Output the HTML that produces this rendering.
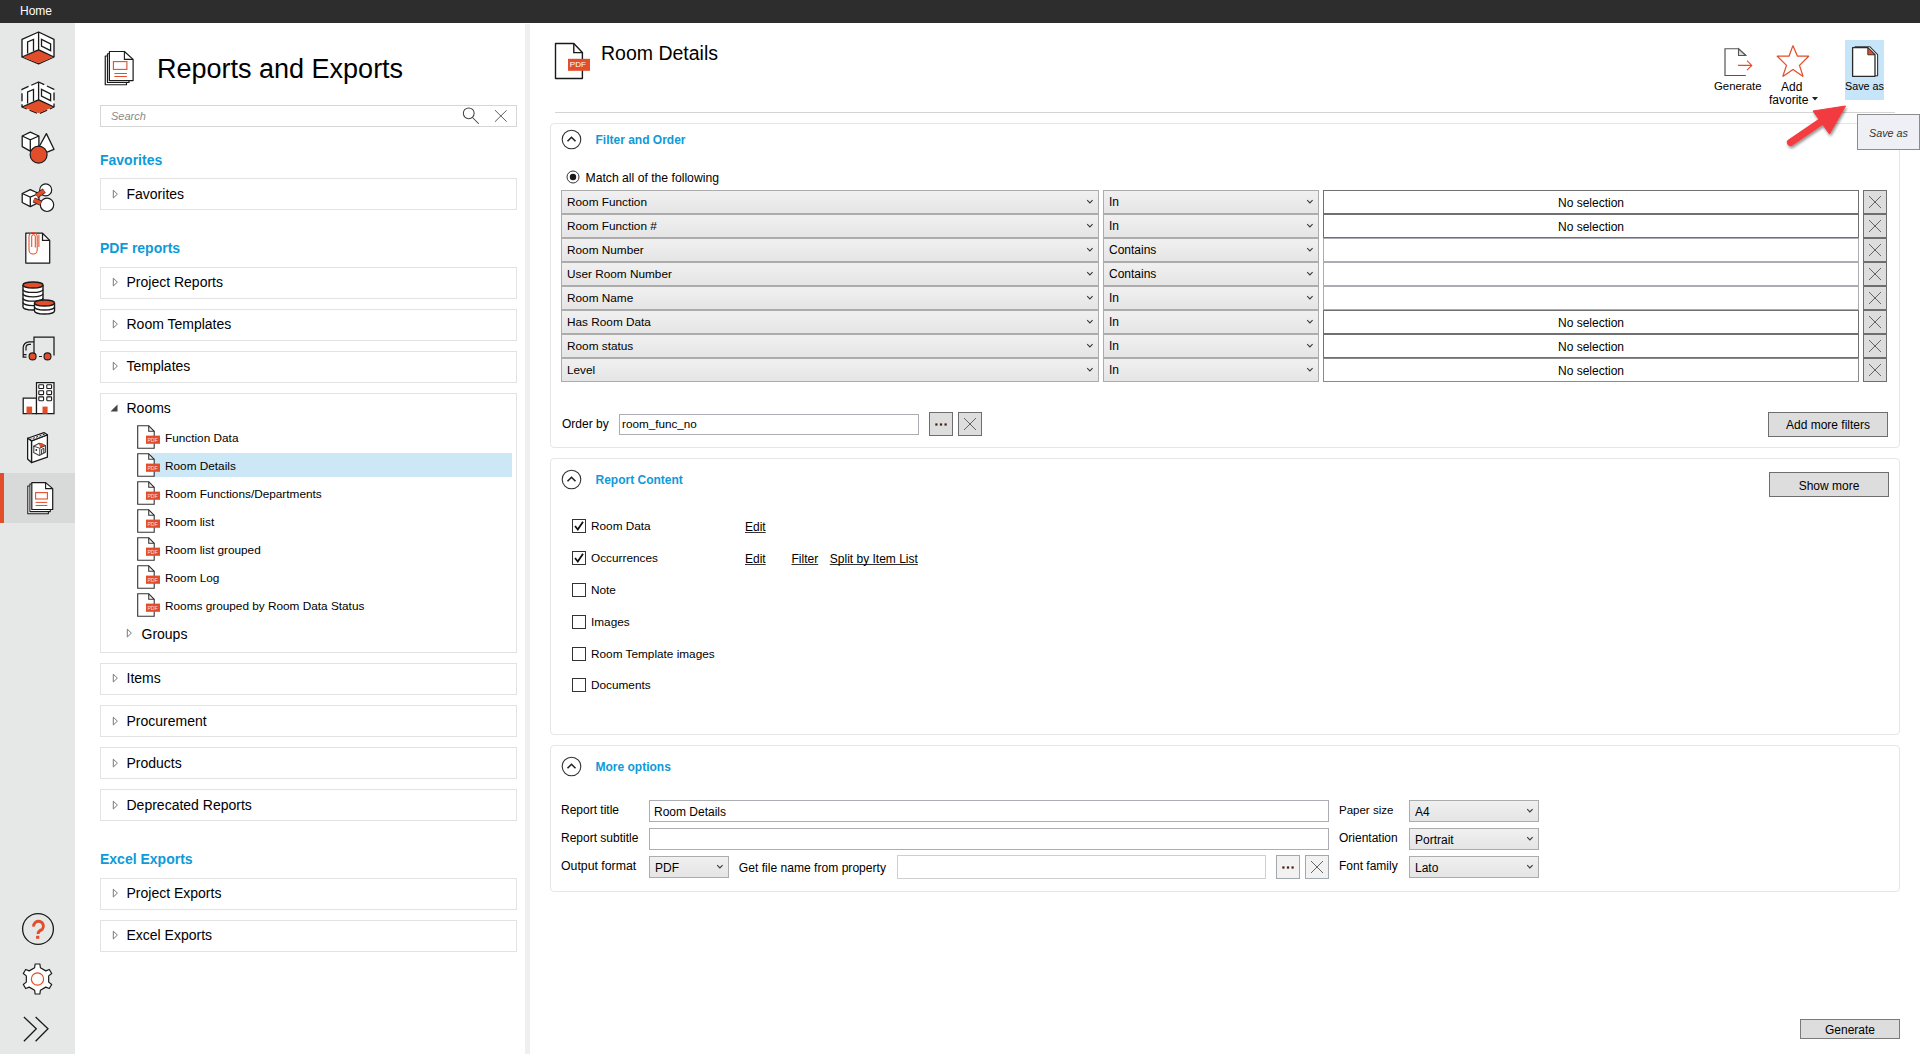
<!DOCTYPE html><html><head><meta charset="utf-8"><style>html,body{margin:0;padding:0;width:1920px;height:1054px;overflow:hidden;background:#fff;font-family:"Liberation Sans", sans-serif;}</style></head><body><div style="position:relative;width:1920px;height:1054px;overflow:hidden"><div style="position:absolute;left:0px;top:0px;width:1920px;height:23px;box-sizing:border-box;background:#2d2d2d"></div>
<div style="position:absolute;left:20px;top:4.84px;font-size:12px;line-height:12px;color:#fff;font-weight:400;font-style:normal;white-space:nowrap;text-align:left;">Home</div>
<div style="position:absolute;left:0px;top:23px;width:75px;height:1031px;box-sizing:border-box;background:#e6e7e7"></div>
<div style="position:absolute;left:0px;top:473px;width:75px;height:50px;box-sizing:border-box;background:#d8d9d9"></div>
<div style="position:absolute;left:0px;top:473px;width:4px;height:50px;box-sizing:border-box;background:#e24e2a"></div>
<svg style="position:absolute;left:21px;top:31px;" width="34" height="34" viewBox="0 0 34 34"><path d="M17.6 1 L1 8.4 L1 26 L17.6 32.8 L33 26 L33 8.4 Z" fill="#fff" stroke="#1a1a1a" stroke-width="1.35" stroke-linejoin="round"/>
<path d="M1.6 26 L17.6 18.8 L32.4 26 L17.6 32.3 Z" fill="#e24e2a"/>
<path d="M17.6 1 V18.8 M1 26 L17.6 18.8 L33 26" fill="none" stroke="#1a1a1a" stroke-width="1.3"/>
<path d="M6.6 22.6 V11 L12.5 8.4 V20" fill="none" stroke="#1a1a1a" stroke-width="1.3"/>
<path d="M20.5 8.4 L29.6 12.9 V19.6 L20.5 15 Z" fill="none" stroke="#1a1a1a" stroke-width="1.3"/></svg>
<svg style="position:absolute;left:21px;top:81px;" width="34" height="34" viewBox="0 0 34 34"><path d="M17.6 1 L1 8.4 L1 26 L17.6 32.8 L33 26 L33 8.4 Z" fill="#fff" stroke="#1a1a1a" stroke-width="1.35" stroke-linejoin="round" stroke-dasharray="8 3"/>
<path d="M1.6 26 L17.6 18.8 L32.4 26 L17.6 32.3 Z" fill="#e24e2a"/>
<path d="M17.6 1 V18.8 M1 26 L17.6 18.8 L33 26" fill="none" stroke="#1a1a1a" stroke-width="1.3"/>
<path d="M6.6 22.6 V11 L12.5 8.4 V20" fill="none" stroke="#1a1a1a" stroke-width="1.3"/>
<path d="M20.5 8.4 L29.6 12.9 V19.6 L20.5 15 Z" fill="none" stroke="#1a1a1a" stroke-width="1.3"/></svg>
<svg style="position:absolute;left:21px;top:131px;" width="34" height="34" viewBox="0 0 34 34"><path d="M25.4 2.6 L18 16 L26.1 21.2 L33 18.3 Z" fill="#fff" stroke="#1a1a1a" stroke-width="1.3" stroke-linejoin="round"/>
<path d="M1.2 5 L9.3 1.1 L17.9 5 V16 L9.3 20.1 L1.2 15.6 Z" fill="#fff" stroke="#1a1a1a" stroke-width="1.3" stroke-linejoin="round"/>
<path d="M1.2 5 L9.3 8.9 L17.9 5 M9.3 8.9 V20" fill="none" stroke="#1a1a1a" stroke-width="1.3"/>
<circle cx="17.6" cy="23.6" r="8.5" fill="#e24e2a" stroke="#1a1a1a" stroke-width="1.2"/></svg>
<svg style="position:absolute;left:21px;top:183px;" width="34" height="32" viewBox="0 0 34 32"><circle cx="24.7" cy="6.9" r="6" fill="#fff" stroke="#1a1a1a" stroke-width="1.2"/>
<circle cx="26" cy="21.8" r="6.7" fill="#fff" stroke="#1a1a1a" stroke-width="1.2"/>
<path d="M1.2 10.5 L9.3 6.7 L17.9 10.5 V19.5 L9.3 23.6 L1.2 19.5 Z" fill="#fff" stroke="#1a1a1a" stroke-width="1.3" stroke-linejoin="round"/>
<path d="M1.2 10.5 L9.3 14.1 L17.9 10.5 M9.3 14.1 V23.6" fill="none" stroke="#1a1a1a" stroke-width="1.3"/>
<path d="M15.6 12.8 L23.2 7.6" stroke="#1a1a1a" stroke-width="5.2"/>
<path d="M15.6 12.8 L23.2 7.6" stroke="#e24e2a" stroke-width="3.9"/>
<path d="M12.8 16.8 L19.8 20.2" stroke="#1a1a1a" stroke-width="5.2"/>
<path d="M12.8 16.8 L19.8 20.2" stroke="#e24e2a" stroke-width="3.9"/></svg>
<svg style="position:absolute;left:25px;top:232px;" width="27" height="33" viewBox="0 0 27 33"><path d="M0.8 1.2 H17.5 L24.7 8.4 V31 H0.8 Z" fill="#fff" stroke="#1a1a1a" stroke-width="1.25" stroke-linejoin="round"/>
<path d="M17.5 1.2 V8.4 H24.7" fill="none" stroke="#1a1a1a" stroke-width="1.25"/>
<rect x="4" y="0.5" width="8.2" height="21.5" rx="4.1" fill="none" stroke="#e24e2a" stroke-width="1.05"/><path d="M6.7 15 V4.6 A1.8 1.8 0 0 1 10.3 4.6 V15.5 M13.9 2.5 V15" fill="none" stroke="#e24e2a" stroke-width="1.05"/></svg>
<svg style="position:absolute;left:22px;top:281px;" width="34" height="34" viewBox="0 0 34 34"><path d="M1 4 V26 A10 3 0 0 0 21 26 V4" fill="#fff" stroke="#1a1a1a" stroke-width="1.4"/><path d="M1 8.4 A10 3 0 0 0 21 8.4" fill="none" stroke="#1a1a1a" stroke-width="1.3"/><path d="M1 12.8 A10 3 0 0 0 21 12.8" fill="none" stroke="#1a1a1a" stroke-width="1.3"/><path d="M1 17.2 A10 3 0 0 0 21 17.2" fill="none" stroke="#1a1a1a" stroke-width="1.3"/><path d="M1 21.6 A10 3 0 0 0 21 21.6" fill="none" stroke="#1a1a1a" stroke-width="1.3"/><ellipse cx="11" cy="4" rx="10" ry="3" fill="#e24e2a" stroke="#1a1a1a" stroke-width="1.4"/><path d="M12.5 22 V30 A10 3 0 0 0 32.5 30 V22" fill="#fff" stroke="#1a1a1a" stroke-width="1.4"/><path d="M12.5 26.0 A10 3 0 0 0 32.5 26.0" fill="none" stroke="#1a1a1a" stroke-width="1.3"/><ellipse cx="22.5" cy="22" rx="10" ry="3" fill="#e24e2a" stroke="#1a1a1a" stroke-width="1.4"/></svg>
<svg style="position:absolute;left:22px;top:336px;" width="34" height="26" viewBox="0 0 34 26"><path d="M12 20 V1.2 H32 V19.5" fill="none" stroke="#1a1a1a" stroke-width="1.25"/>
<path d="M12 5.8 H7 A5.8 5.8 0 0 0 1.2 11.6 V21.2 H4.5" fill="none" stroke="#1a1a1a" stroke-width="1.25"/>
<path d="M9 8.3 H7.3 A3.3 3.3 0 0 0 4 11.6 V14.5" fill="none" stroke="#1a1a1a" stroke-width="1.2"/>
<path d="M1.2 18.6 H4.5 M17 20.5 H20" fill="none" stroke="#1a1a1a" stroke-width="1.2"/>
<circle cx="10.6" cy="20.4" r="3.5" fill="#e24e2a" stroke="#1a1a1a" stroke-width="1.1"/>
<circle cx="25.5" cy="20.4" r="3.5" fill="#e24e2a" stroke="#1a1a1a" stroke-width="1.1"/></svg>
<svg style="position:absolute;left:22px;top:382px;" width="34" height="34" viewBox="0 0 34 34"><path d="M1.2 16.2 H14.5 V31.6 H1.2 Z" fill="#fff" stroke="#1a1a1a" stroke-width="1.25"/>
<path d="M14.5 0.5 H32 V31.6 H14.5 Z" fill="#fff" stroke="#1a1a1a" stroke-width="1.25"/>
<rect x="16.8" y="2.7" width="4.8" height="3.8" rx="0.6" fill="#fff" stroke="#1a1a1a" stroke-width="1.1"/>
<rect x="24.8" y="2.7" width="4.8" height="3.8" rx="0.6" fill="#fff" stroke="#1a1a1a" stroke-width="1.1"/>
<rect x="16.8" y="8.8" width="4.8" height="3.8" rx="0.6" fill="#fff" stroke="#1a1a1a" stroke-width="1.1"/>
<rect x="24.8" y="8.8" width="4.8" height="3.8" rx="0.6" fill="#fff" stroke="#1a1a1a" stroke-width="1.1"/>
<rect x="16.8" y="14.9" width="4.8" height="3.8" rx="0.6" fill="#fff" stroke="#1a1a1a" stroke-width="1.1"/>
<rect x="24.8" y="14.9" width="4.8" height="3.8" rx="0.6" fill="#fff" stroke="#1a1a1a" stroke-width="1.1"/>
<rect x="4.5" y="24.6" width="5.6" height="7" fill="#e24e2a"/>
<rect x="20.5" y="24.6" width="5.1" height="7" fill="#e24e2a"/></svg>
<svg style="position:absolute;left:27px;top:432px;" width="22" height="32" viewBox="0 0 22 32"><path d="M4.5 8.9 L20.4 2.8 V25.2 L4.5 30.6 Z" fill="#fff" stroke="#1a1a1a" stroke-width="1.3" stroke-linejoin="round"/>
<path d="M0.6 6.3 L17 0.6 L20.4 2.8 L4.5 8.9 Z" fill="#fff" stroke="#1a1a1a" stroke-width="1.2" stroke-linejoin="round"/>
<path d="M2.5 7.6 L18.5 1.8" fill="none" stroke="#1a1a1a" stroke-width="1" stroke-dasharray="2.2 1.3"/>
<path d="M0.6 6.3 V27.1 L4.5 30.6 V8.9 Z" fill="#fff" stroke="#1a1a1a" stroke-width="1.3" stroke-linejoin="round"/>
<path d="M6.6 14.2 L12.2 11.2 L18.4 13.6 V20.2 L12.3 23.4 L6.6 20.6 Z" fill="#fff" stroke="#444" stroke-width="1.1" stroke-linejoin="round"/>
<path d="M7 14.6 V20.3" stroke="#999" stroke-width="1"/>
<path d="M11.8 12 L15 10.9 L18.2 13.4 L13.6 16 Z" fill="#e24e2a"/>
<path d="M6.6 14.2 L12.8 16.2 L18.4 13.6 M12.8 16.2 V23" fill="none" stroke="#333" stroke-width="0.9"/>
<path d="M14.6 22 V17.4 L16.8 16.4 V21" fill="none" stroke="#333" stroke-width="1"/>
<circle cx="9.3" cy="18" r="0.9" fill="#222"/></svg>
<svg style="position:absolute;left:27px;top:482px;" width="27" height="33" viewBox="0 0 27 33"><path d="M0.8 4 H14.6 L21.4 10 V31.8 H0.8 Z" fill="#fff" stroke="#1a1a1a" stroke-width="1.05" stroke-linejoin="round"/>
<path d="M2.9 2 H16.6 L23.3 8 V29.6 H2.9 Z" fill="#fff" stroke="#1a1a1a" stroke-width="1.05" stroke-linejoin="round"/>
<path d="M4.8 0.6 H18.6 L25.7 6.6 V27.5 H4.8 Z" fill="#fff" stroke="#1a1a1a" stroke-width="1.2" stroke-linejoin="round"/>
<path d="M18.6 0.6 V6.6 H25.7" fill="none" stroke="#1a1a1a" stroke-width="1.1"/>
<rect x="8.6" y="10.6" width="11.8" height="6.4" fill="none" stroke="#e24e2a" stroke-width="1.1"/>
<path d="M8.6 20.4 H20.3 M8.6 23.5 H20.3" stroke="#e24e2a" stroke-width="1"/></svg>
<svg style="position:absolute;left:21px;top:912px;" width="34" height="34" viewBox="0 0 34 34"><circle cx="17" cy="17" r="15.4" fill="none" stroke="#1a1a1a" stroke-width="1.3"/>
<path d="M12.65 14.6 A4.9 4.9 0 1 1 21.3 17.3 Q17.1 19 17.1 21.5 V22" fill="none" stroke="#e24e2a" stroke-width="2.9" stroke-linecap="butt"/>
<rect x="15.1" y="23.8" width="3.2" height="3" fill="#e24e2a"/></svg>
<svg style="position:absolute;left:21px;top:962px;" width="34" height="34" viewBox="0 0 34 34"><path d="M14.12 1.99 L18.88 1.99 L19.38 5.76 L24.79 8.88 L28.31 7.43 L30.69 11.55 L27.67 13.88 L27.67 20.12 L30.69 22.45 L28.31 26.57 L24.79 25.12 L19.38 28.24 L18.88 32.01 L14.12 32.01 L13.62 28.24 L8.21 25.12 L4.69 26.57 L2.31 22.45 L5.33 20.12 L5.33 13.88 L2.31 11.55 L4.69 7.43 L8.21 8.88 L13.62 5.76 Z" fill="#fff" stroke="#1a1a1a" stroke-width="1.2" stroke-linejoin="round"/><circle cx="16.5" cy="17" r="6.1" fill="none" stroke="#e24e2a" stroke-width="1.2"/></svg>
<svg style="position:absolute;left:22px;top:1015px;" width="30" height="28" viewBox="0 0 30 28"><path d="M1.9 2 L14.3 13.7 L1.9 26.2 M13.6 2 L26 13.7 L13.6 26.2" fill="none" stroke="#1a1a1a" stroke-width="1.3"/></svg>
<div style="position:absolute;left:75px;top:23px;width:450px;height:1031px;box-sizing:border-box;background:#fff"></div>
<div style="position:absolute;left:525px;top:24px;width:5px;height:1030px;box-sizing:border-box;background:#efefef"></div>
<svg style="position:absolute;left:104px;top:50px;" width="31" height="36" viewBox="0 0 31 36"><path d="M1.25 6 H18 L22.5 10 V34.75 H1.25 Z" fill="#fff" stroke="#1a1a1a" stroke-width="1.2" stroke-linejoin="round"/>
<path d="M3.5 3.75 H20 L25 8.5 V32.5 H3.5 Z" fill="#fff" stroke="#1a1a1a" stroke-width="1.2" stroke-linejoin="round"/>
<path d="M5.4 1.5 H20.4 L29.1 9.4 V30.6 H5.4 Z" fill="#fff" stroke="#1a1a1a" stroke-width="1.2" stroke-linejoin="round"/>
<path d="M20.4 1.5 V9.4 H29.1" fill="none" stroke="#1a1a1a" stroke-width="1.1"/>
<rect x="9.4" y="11.6" width="13.5" height="7.8" fill="none" stroke="#e24e2a" stroke-width="1.1"/>
<path d="M10.4 23.5 H22.9 M10.4 26.5 H22.9" stroke="#e24e2a" stroke-width="1"/></svg>
<div style="position:absolute;left:157px;top:55.94px;font-size:27px;line-height:27px;color:#000;font-weight:400;font-style:normal;white-space:nowrap;text-align:left;">Reports and Exports</div>
<div style="position:absolute;left:100px;top:105px;width:417px;height:22px;box-sizing:border-box;border:1px solid #d6d6d6;background:#fff"></div>
<div style="position:absolute;left:111px;top:111.29px;font-size:11px;line-height:11px;color:#8a8a8a;font-weight:400;font-style:italic;white-space:nowrap;text-align:left;">Search</div>
<svg style="position:absolute;left:462px;top:107px;" width="18" height="18" viewBox="0 0 18 18"><circle cx="6.75" cy="6.3" r="5.4" fill="none" stroke="#444" stroke-width="1.05"/><path d="M10.5 10.5 L16.75 16.75" stroke="#444" stroke-width="1.05"/></svg>
<svg style="position:absolute;left:494px;top:110px;" width="14" height="13" viewBox="0 0 14 13"><path d="M1 0.2 L12.7 11.7 M12.7 0.2 L1 11.7" stroke="#555" stroke-width="0.95"/></svg>
<div style="position:absolute;left:100px;top:153.15px;font-size:14px;line-height:14px;color:#0e9ad8;font-weight:700;font-style:normal;white-space:nowrap;text-align:left;">Favorites</div>
<div style="position:absolute;left:100px;top:178px;width:417px;height:32px;box-sizing:border-box;border:1px solid #e3e3e3;background:#fff"></div>
<svg style="position:absolute;left:112px;top:188.8px;" width="7" height="10" viewBox="0 0 7 10"><path d="M1.3 1.2 L5.4 5.1 L1.3 9 Z" fill="none" stroke="#7a7a7a" stroke-width="1" stroke-linejoin="miter"/></svg>
<div style="position:absolute;left:126.5px;top:186.55px;font-size:14px;line-height:14px;color:#000;font-weight:400;font-style:normal;white-space:nowrap;text-align:left;">Favorites</div>
<div style="position:absolute;left:100px;top:241.15px;font-size:14px;line-height:14px;color:#0e9ad8;font-weight:700;font-style:normal;white-space:nowrap;text-align:left;">PDF reports</div>
<div style="position:absolute;left:100px;top:267px;width:417px;height:32px;box-sizing:border-box;border:1px solid #e3e3e3;background:#fff"></div>
<svg style="position:absolute;left:112px;top:276.8px;" width="7" height="10" viewBox="0 0 7 10"><path d="M1.3 1.2 L5.4 5.1 L1.3 9 Z" fill="none" stroke="#7a7a7a" stroke-width="1" stroke-linejoin="miter"/></svg>
<div style="position:absolute;left:126.5px;top:274.55px;font-size:14px;line-height:14px;color:#000;font-weight:400;font-style:normal;white-space:nowrap;text-align:left;">Project Reports</div>
<div style="position:absolute;left:100px;top:309px;width:417px;height:32px;box-sizing:border-box;border:1px solid #e3e3e3;background:#fff"></div>
<svg style="position:absolute;left:112px;top:318.8px;" width="7" height="10" viewBox="0 0 7 10"><path d="M1.3 1.2 L5.4 5.1 L1.3 9 Z" fill="none" stroke="#7a7a7a" stroke-width="1" stroke-linejoin="miter"/></svg>
<div style="position:absolute;left:126.5px;top:316.55px;font-size:14px;line-height:14px;color:#000;font-weight:400;font-style:normal;white-space:nowrap;text-align:left;">Room Templates</div>
<div style="position:absolute;left:100px;top:351px;width:417px;height:32px;box-sizing:border-box;border:1px solid #e3e3e3;background:#fff"></div>
<svg style="position:absolute;left:112px;top:360.8px;" width="7" height="10" viewBox="0 0 7 10"><path d="M1.3 1.2 L5.4 5.1 L1.3 9 Z" fill="none" stroke="#7a7a7a" stroke-width="1" stroke-linejoin="miter"/></svg>
<div style="position:absolute;left:126.5px;top:358.55px;font-size:14px;line-height:14px;color:#000;font-weight:400;font-style:normal;white-space:nowrap;text-align:left;">Templates</div>
<div style="position:absolute;left:100px;top:393px;width:417px;height:260px;box-sizing:border-box;border:1px solid #e3e3e3;background:#fff"></div>
<svg style="position:absolute;left:109px;top:403px;" width="10" height="10" viewBox="0 0 10 10"><path d="M8.5 1.5 V8.5 H1.5 Z" fill="#444"/></svg>
<div style="position:absolute;left:126.5px;top:400.55px;font-size:14px;line-height:14px;color:#000;font-weight:400;font-style:normal;white-space:nowrap;text-align:left;">Rooms</div>
<div style="position:absolute;left:151px;top:453px;width:361px;height:24px;box-sizing:border-box;background:#cce8f7"></div>
<svg style="position:absolute;left:137px;top:425px;" width="24" height="25" viewBox="0 0 24 25"><path d="M0.7 0.8 H11.75 L17.2 6.25 V23.2 H0.7 Z" fill="#fff" stroke="#333" stroke-width="1.1"/>
<path d="M11.75 0.8 V6.25 H17.2" fill="none" stroke="#333" stroke-width="1.1"/>
<rect x="9" y="10.6" width="14" height="8.2" fill="#e24e2a"/>
<text x="15.6" y="17" font-family="Liberation Sans" font-size="5.2" fill="#fde" text-anchor="middle">PDF</text></svg>
<div style="position:absolute;left:165px;top:432.81px;font-size:11.8px;line-height:11.8px;color:#000;font-weight:400;font-style:normal;white-space:nowrap;text-align:left;">Function Data</div>
<svg style="position:absolute;left:137px;top:453px;" width="24" height="25" viewBox="0 0 24 25"><path d="M0.7 0.8 H11.75 L17.2 6.25 V23.2 H0.7 Z" fill="#fff" stroke="#333" stroke-width="1.1"/>
<path d="M11.75 0.8 V6.25 H17.2" fill="none" stroke="#333" stroke-width="1.1"/>
<rect x="9" y="10.6" width="14" height="8.2" fill="#e24e2a"/>
<text x="15.6" y="17" font-family="Liberation Sans" font-size="5.2" fill="#fde" text-anchor="middle">PDF</text></svg>
<div style="position:absolute;left:165px;top:460.81px;font-size:11.8px;line-height:11.8px;color:#000;font-weight:400;font-style:normal;white-space:nowrap;text-align:left;">Room Details</div>
<svg style="position:absolute;left:137px;top:481px;" width="24" height="25" viewBox="0 0 24 25"><path d="M0.7 0.8 H11.75 L17.2 6.25 V23.2 H0.7 Z" fill="#fff" stroke="#333" stroke-width="1.1"/>
<path d="M11.75 0.8 V6.25 H17.2" fill="none" stroke="#333" stroke-width="1.1"/>
<rect x="9" y="10.6" width="14" height="8.2" fill="#e24e2a"/>
<text x="15.6" y="17" font-family="Liberation Sans" font-size="5.2" fill="#fde" text-anchor="middle">PDF</text></svg>
<div style="position:absolute;left:165px;top:488.81px;font-size:11.8px;line-height:11.8px;color:#000;font-weight:400;font-style:normal;white-space:nowrap;text-align:left;">Room Functions/Departments</div>
<svg style="position:absolute;left:137px;top:509px;" width="24" height="25" viewBox="0 0 24 25"><path d="M0.7 0.8 H11.75 L17.2 6.25 V23.2 H0.7 Z" fill="#fff" stroke="#333" stroke-width="1.1"/>
<path d="M11.75 0.8 V6.25 H17.2" fill="none" stroke="#333" stroke-width="1.1"/>
<rect x="9" y="10.6" width="14" height="8.2" fill="#e24e2a"/>
<text x="15.6" y="17" font-family="Liberation Sans" font-size="5.2" fill="#fde" text-anchor="middle">PDF</text></svg>
<div style="position:absolute;left:165px;top:516.81px;font-size:11.8px;line-height:11.8px;color:#000;font-weight:400;font-style:normal;white-space:nowrap;text-align:left;">Room list</div>
<svg style="position:absolute;left:137px;top:537px;" width="24" height="25" viewBox="0 0 24 25"><path d="M0.7 0.8 H11.75 L17.2 6.25 V23.2 H0.7 Z" fill="#fff" stroke="#333" stroke-width="1.1"/>
<path d="M11.75 0.8 V6.25 H17.2" fill="none" stroke="#333" stroke-width="1.1"/>
<rect x="9" y="10.6" width="14" height="8.2" fill="#e24e2a"/>
<text x="15.6" y="17" font-family="Liberation Sans" font-size="5.2" fill="#fde" text-anchor="middle">PDF</text></svg>
<div style="position:absolute;left:165px;top:544.81px;font-size:11.8px;line-height:11.8px;color:#000;font-weight:400;font-style:normal;white-space:nowrap;text-align:left;">Room list grouped</div>
<svg style="position:absolute;left:137px;top:565px;" width="24" height="25" viewBox="0 0 24 25"><path d="M0.7 0.8 H11.75 L17.2 6.25 V23.2 H0.7 Z" fill="#fff" stroke="#333" stroke-width="1.1"/>
<path d="M11.75 0.8 V6.25 H17.2" fill="none" stroke="#333" stroke-width="1.1"/>
<rect x="9" y="10.6" width="14" height="8.2" fill="#e24e2a"/>
<text x="15.6" y="17" font-family="Liberation Sans" font-size="5.2" fill="#fde" text-anchor="middle">PDF</text></svg>
<div style="position:absolute;left:165px;top:572.81px;font-size:11.8px;line-height:11.8px;color:#000;font-weight:400;font-style:normal;white-space:nowrap;text-align:left;">Room Log</div>
<svg style="position:absolute;left:137px;top:593px;" width="24" height="25" viewBox="0 0 24 25"><path d="M0.7 0.8 H11.75 L17.2 6.25 V23.2 H0.7 Z" fill="#fff" stroke="#333" stroke-width="1.1"/>
<path d="M11.75 0.8 V6.25 H17.2" fill="none" stroke="#333" stroke-width="1.1"/>
<rect x="9" y="10.6" width="14" height="8.2" fill="#e24e2a"/>
<text x="15.6" y="17" font-family="Liberation Sans" font-size="5.2" fill="#fde" text-anchor="middle">PDF</text></svg>
<div style="position:absolute;left:165px;top:600.81px;font-size:11.8px;line-height:11.8px;color:#000;font-weight:400;font-style:normal;white-space:nowrap;text-align:left;">Rooms grouped by Room Data Status</div>
<svg style="position:absolute;left:126px;top:628px;" width="7" height="10" viewBox="0 0 7 10"><path d="M1.3 1.2 L5.4 5.1 L1.3 9 Z" fill="none" stroke="#7a7a7a" stroke-width="1" stroke-linejoin="miter"/></svg>
<div style="position:absolute;left:141.5px;top:627.15px;font-size:14px;line-height:14px;color:#000;font-weight:400;font-style:normal;white-space:nowrap;text-align:left;">Groups</div>
<div style="position:absolute;left:100px;top:663px;width:417px;height:32px;box-sizing:border-box;border:1px solid #e3e3e3;background:#fff"></div>
<svg style="position:absolute;left:112px;top:672.8px;" width="7" height="10" viewBox="0 0 7 10"><path d="M1.3 1.2 L5.4 5.1 L1.3 9 Z" fill="none" stroke="#7a7a7a" stroke-width="1" stroke-linejoin="miter"/></svg>
<div style="position:absolute;left:126.5px;top:670.55px;font-size:14px;line-height:14px;color:#000;font-weight:400;font-style:normal;white-space:nowrap;text-align:left;">Items</div>
<div style="position:absolute;left:100px;top:705px;width:417px;height:32px;box-sizing:border-box;border:1px solid #e3e3e3;background:#fff"></div>
<svg style="position:absolute;left:112px;top:715.8px;" width="7" height="10" viewBox="0 0 7 10"><path d="M1.3 1.2 L5.4 5.1 L1.3 9 Z" fill="none" stroke="#7a7a7a" stroke-width="1" stroke-linejoin="miter"/></svg>
<div style="position:absolute;left:126.5px;top:713.55px;font-size:14px;line-height:14px;color:#000;font-weight:400;font-style:normal;white-space:nowrap;text-align:left;">Procurement</div>
<div style="position:absolute;left:100px;top:747px;width:417px;height:32px;box-sizing:border-box;border:1px solid #e3e3e3;background:#fff"></div>
<svg style="position:absolute;left:112px;top:757.8px;" width="7" height="10" viewBox="0 0 7 10"><path d="M1.3 1.2 L5.4 5.1 L1.3 9 Z" fill="none" stroke="#7a7a7a" stroke-width="1" stroke-linejoin="miter"/></svg>
<div style="position:absolute;left:126.5px;top:755.55px;font-size:14px;line-height:14px;color:#000;font-weight:400;font-style:normal;white-space:nowrap;text-align:left;">Products</div>
<div style="position:absolute;left:100px;top:789px;width:417px;height:32px;box-sizing:border-box;border:1px solid #e3e3e3;background:#fff"></div>
<svg style="position:absolute;left:112px;top:799.8px;" width="7" height="10" viewBox="0 0 7 10"><path d="M1.3 1.2 L5.4 5.1 L1.3 9 Z" fill="none" stroke="#7a7a7a" stroke-width="1" stroke-linejoin="miter"/></svg>
<div style="position:absolute;left:126.5px;top:797.55px;font-size:14px;line-height:14px;color:#000;font-weight:400;font-style:normal;white-space:nowrap;text-align:left;">Deprecated Reports</div>
<div style="position:absolute;left:100px;top:852.35px;font-size:14px;line-height:14px;color:#0e9ad8;font-weight:700;font-style:normal;white-space:nowrap;text-align:left;">Excel Exports</div>
<div style="position:absolute;left:100px;top:878px;width:417px;height:32px;box-sizing:border-box;border:1px solid #e3e3e3;background:#fff"></div>
<svg style="position:absolute;left:112px;top:887.8px;" width="7" height="10" viewBox="0 0 7 10"><path d="M1.3 1.2 L5.4 5.1 L1.3 9 Z" fill="none" stroke="#7a7a7a" stroke-width="1" stroke-linejoin="miter"/></svg>
<div style="position:absolute;left:126.5px;top:885.55px;font-size:14px;line-height:14px;color:#000;font-weight:400;font-style:normal;white-space:nowrap;text-align:left;">Project Exports</div>
<div style="position:absolute;left:100px;top:920px;width:417px;height:32px;box-sizing:border-box;border:1px solid #e3e3e3;background:#fff"></div>
<svg style="position:absolute;left:112px;top:929.8px;" width="7" height="10" viewBox="0 0 7 10"><path d="M1.3 1.2 L5.4 5.1 L1.3 9 Z" fill="none" stroke="#7a7a7a" stroke-width="1" stroke-linejoin="miter"/></svg>
<div style="position:absolute;left:126.5px;top:927.55px;font-size:14px;line-height:14px;color:#000;font-weight:400;font-style:normal;white-space:nowrap;text-align:left;">Excel Exports</div>
<svg style="position:absolute;left:554px;top:42px;" width="36" height="38" viewBox="0 0 36 38"><path d="M1.5 1.5 H19.8 L28.4 10.6 V36.5 H1.5 Z" fill="#fff" stroke="#1a1a1a" stroke-width="1.4" stroke-linejoin="round"/>
<path d="M19.8 1.5 V10.6 H28.4" fill="none" stroke="#1a1a1a" stroke-width="1.4"/>
<rect x="14" y="16.8" width="22" height="12" fill="#e24e2a"/>
<text x="23.8" y="25.3" font-family="Liberation Sans" font-size="8" fill="#fff" text-anchor="middle">PDF</text></svg>
<div style="position:absolute;left:601px;top:44.49px;font-size:19.5px;line-height:19.5px;color:#000;font-weight:400;font-style:normal;white-space:nowrap;text-align:left;">Room Details</div>
<div style="position:absolute;left:555px;top:112px;width:1340px;height:1px;box-sizing:border-box;background:#d4d4d4"></div>
<svg style="position:absolute;left:1722px;top:46px;" width="34" height="32" viewBox="0 0 34 32"><path d="M23.8 9.5 L16.5 2.75 H3 V29.5 H23.8" fill="#fff" stroke="#555" stroke-width="1.2" stroke-linejoin="miter"/>
<path d="M16.5 2.75 V9.5 H23.8 Z" fill="#ddd" stroke="#555" stroke-width="1.1"/>
<path d="M16 19.4 H29.6 M25 14.6 L29.8 19.4 L25 24.2" fill="none" stroke="#e24e2a" stroke-width="1.1"/></svg>
<div style="position:absolute;left:1714px;top:80.85px;font-size:11.4px;line-height:11.4px;color:#000;font-weight:400;font-style:normal;white-space:nowrap;text-align:left;">Generate</div>
<svg style="position:absolute;left:1776px;top:44px;" width="34" height="36" viewBox="0 0 34 36"><path d="M16.90 1.60 L21.40 12.00 L32.90 12.00 L23.50 21.40 L27.10 32.40 L17.00 25.60 L6.80 32.40 L10.50 21.40 L1.00 12.00 L13.10 12.00 Z" fill="none" stroke="#e24e2a" stroke-width="1.25" stroke-linejoin="miter" stroke-miterlimit="2.2"/></svg>
<div style="position:absolute;left:1781px;top:80.84px;font-size:12px;line-height:12px;color:#000;font-weight:400;font-style:normal;white-space:nowrap;text-align:left;">Add</div>
<div style="position:absolute;left:1769px;top:93.84px;font-size:12px;line-height:12px;color:#000;font-weight:400;font-style:normal;white-space:nowrap;text-align:left;">favorite</div>
<svg style="position:absolute;left:1812px;top:97px;" width="6" height="4" viewBox="0 0 6 4"><path d="M0 0 H6 L3 3.5 Z" fill="#222"/></svg>
<div style="position:absolute;left:1845px;top:40px;width:39px;height:60px;box-sizing:border-box;background:#c7e5f8"></div>
<svg style="position:absolute;left:1850px;top:45px;" width="30" height="34" viewBox="0 0 30 34"><path d="M5 1.7 H19.8 L27.6 9.6 V30.8 H5 Z" fill="#fff" stroke="#333" stroke-width="1.1" stroke-linejoin="round"/>
<path d="M2.6 2.6 H17.8 L25 9.8 V31.3 H2.6 Z" fill="#fff" stroke="#2a2a2a" stroke-width="1.3" stroke-linejoin="round"/>
<path d="M17.8 3.2 L24.6 9.8 H17.8 Z" fill="#e24e2a"/>
<path d="M17.8 2.6 V9.8 H25" fill="none" stroke="#2a2a2a" stroke-width="0.9"/></svg>
<div style="position:absolute;left:1845px;top:80.86px;font-size:10.8px;line-height:10.8px;color:#000;font-weight:400;font-style:normal;white-space:nowrap;text-align:left;">Save as</div>
<div style="position:absolute;left:550px;top:123px;width:1350px;height:325px;box-sizing:border-box;border:1px solid #e6e6e6;border-radius:4px;background:#fff"></div>
<svg style="position:absolute;left:561px;top:129px;" width="21" height="21" viewBox="0 0 21 21"><circle cx="10.5" cy="10.5" r="9.3" fill="#fff" stroke="#333" stroke-width="1.1"/><path d="M6.5 12.3 L10.5 8.3 L14.5 12.3" fill="none" stroke="#222" stroke-width="1.6"/></svg>
<div style="position:absolute;left:595.5px;top:133.84px;font-size:12px;line-height:12px;color:#0e9ad8;font-weight:700;font-style:normal;white-space:nowrap;text-align:left;">Filter and Order</div>
<svg style="position:absolute;left:566px;top:170px;" width="14" height="14" viewBox="0 0 14 14"><circle cx="7" cy="7" r="6" fill="#fff" stroke="#333" stroke-width="1"/><circle cx="7" cy="7" r="3.2" fill="#1a1a1a"/></svg>
<div style="position:absolute;left:585.5px;top:172.17px;font-size:12.2px;line-height:12.2px;color:#000;font-weight:400;font-style:normal;white-space:nowrap;text-align:left;">Match all of the following</div>
<div style="position:absolute;left:561px;top:190px;width:538px;height:24px;box-sizing:border-box;border:1px solid #acacac;background:linear-gradient(#f0f0f0,#e5e5e5)"></div>
<div style="position:absolute;left:567px;top:196.91px;font-size:11.8px;line-height:11.8px;color:#000;font-weight:400;font-style:normal;white-space:nowrap;text-align:left;">Room Function</div>
<svg style="position:absolute;left:1086px;top:199.0px;" width="8" height="6" viewBox="0 0 8 6"><path d="M1.2 1.2 L3.9 3.9 L6.6 1.2" fill="none" stroke="#3c3c3c" stroke-width="1.15"/></svg>
<div style="position:absolute;left:1103px;top:190px;width:216px;height:24px;box-sizing:border-box;border:1px solid #acacac;background:linear-gradient(#f0f0f0,#e5e5e5)"></div>
<div style="position:absolute;left:1109px;top:196.14px;font-size:12px;line-height:12px;color:#000;font-weight:400;font-style:normal;white-space:nowrap;text-align:left;">In</div>
<svg style="position:absolute;left:1306px;top:199.0px;" width="8" height="6" viewBox="0 0 8 6"><path d="M1.2 1.2 L3.9 3.9 L6.6 1.2" fill="none" stroke="#3c3c3c" stroke-width="1.15"/></svg>
<div style="position:absolute;left:1323px;top:190px;width:536px;height:24px;box-sizing:border-box;border:1px solid #707070;background:#fff"></div>
<div style="position:absolute;left:1323px;top:197.04px;font-size:12px;line-height:12px;color:#000;font-weight:400;font-style:normal;white-space:nowrap;text-align:center;width:536px;">No selection</div>
<div style="position:absolute;left:1863px;top:190px;width:24px;height:24px;box-sizing:border-box;border:1px solid #6e6e6e;background:#dddddd"></div>
<svg style="position:absolute;left:1868px;top:195px;" width="14" height="14" viewBox="0 0 14 14"><path d="M1 1 L13 13 M13 1 L1 13" stroke="#555" stroke-width="0.9"/></svg>
<div style="position:absolute;left:561px;top:214px;width:538px;height:24px;box-sizing:border-box;border:1px solid #acacac;background:linear-gradient(#f0f0f0,#e5e5e5)"></div>
<div style="position:absolute;left:567px;top:220.91px;font-size:11.8px;line-height:11.8px;color:#000;font-weight:400;font-style:normal;white-space:nowrap;text-align:left;">Room Function #</div>
<svg style="position:absolute;left:1086px;top:223.0px;" width="8" height="6" viewBox="0 0 8 6"><path d="M1.2 1.2 L3.9 3.9 L6.6 1.2" fill="none" stroke="#3c3c3c" stroke-width="1.15"/></svg>
<div style="position:absolute;left:1103px;top:214px;width:216px;height:24px;box-sizing:border-box;border:1px solid #acacac;background:linear-gradient(#f0f0f0,#e5e5e5)"></div>
<div style="position:absolute;left:1109px;top:220.14px;font-size:12px;line-height:12px;color:#000;font-weight:400;font-style:normal;white-space:nowrap;text-align:left;">In</div>
<svg style="position:absolute;left:1306px;top:223.0px;" width="8" height="6" viewBox="0 0 8 6"><path d="M1.2 1.2 L3.9 3.9 L6.6 1.2" fill="none" stroke="#3c3c3c" stroke-width="1.15"/></svg>
<div style="position:absolute;left:1323px;top:214px;width:536px;height:24px;box-sizing:border-box;border:1px solid #707070;background:#fff"></div>
<div style="position:absolute;left:1323px;top:221.04px;font-size:12px;line-height:12px;color:#000;font-weight:400;font-style:normal;white-space:nowrap;text-align:center;width:536px;">No selection</div>
<div style="position:absolute;left:1863px;top:214px;width:24px;height:24px;box-sizing:border-box;border:1px solid #6e6e6e;background:#dddddd"></div>
<svg style="position:absolute;left:1868px;top:219px;" width="14" height="14" viewBox="0 0 14 14"><path d="M1 1 L13 13 M13 1 L1 13" stroke="#555" stroke-width="0.9"/></svg>
<div style="position:absolute;left:561px;top:238px;width:538px;height:24px;box-sizing:border-box;border:1px solid #acacac;background:linear-gradient(#f0f0f0,#e5e5e5)"></div>
<div style="position:absolute;left:567px;top:244.91px;font-size:11.8px;line-height:11.8px;color:#000;font-weight:400;font-style:normal;white-space:nowrap;text-align:left;">Room Number</div>
<svg style="position:absolute;left:1086px;top:247.0px;" width="8" height="6" viewBox="0 0 8 6"><path d="M1.2 1.2 L3.9 3.9 L6.6 1.2" fill="none" stroke="#3c3c3c" stroke-width="1.15"/></svg>
<div style="position:absolute;left:1103px;top:238px;width:216px;height:24px;box-sizing:border-box;border:1px solid #acacac;background:linear-gradient(#f0f0f0,#e5e5e5)"></div>
<div style="position:absolute;left:1109px;top:244.14px;font-size:12px;line-height:12px;color:#000;font-weight:400;font-style:normal;white-space:nowrap;text-align:left;">Contains</div>
<svg style="position:absolute;left:1306px;top:247.0px;" width="8" height="6" viewBox="0 0 8 6"><path d="M1.2 1.2 L3.9 3.9 L6.6 1.2" fill="none" stroke="#3c3c3c" stroke-width="1.15"/></svg>
<div style="position:absolute;left:1323px;top:238px;width:536px;height:24px;box-sizing:border-box;border:1px solid #abadb3;background:#fff"></div>
<div style="position:absolute;left:1863px;top:238px;width:24px;height:24px;box-sizing:border-box;border:1px solid #6e6e6e;background:#dddddd"></div>
<svg style="position:absolute;left:1868px;top:243px;" width="14" height="14" viewBox="0 0 14 14"><path d="M1 1 L13 13 M13 1 L1 13" stroke="#555" stroke-width="0.9"/></svg>
<div style="position:absolute;left:561px;top:262px;width:538px;height:24px;box-sizing:border-box;border:1px solid #acacac;background:linear-gradient(#f0f0f0,#e5e5e5)"></div>
<div style="position:absolute;left:567px;top:268.91px;font-size:11.8px;line-height:11.8px;color:#000;font-weight:400;font-style:normal;white-space:nowrap;text-align:left;">User Room Number</div>
<svg style="position:absolute;left:1086px;top:271.0px;" width="8" height="6" viewBox="0 0 8 6"><path d="M1.2 1.2 L3.9 3.9 L6.6 1.2" fill="none" stroke="#3c3c3c" stroke-width="1.15"/></svg>
<div style="position:absolute;left:1103px;top:262px;width:216px;height:24px;box-sizing:border-box;border:1px solid #acacac;background:linear-gradient(#f0f0f0,#e5e5e5)"></div>
<div style="position:absolute;left:1109px;top:268.14px;font-size:12px;line-height:12px;color:#000;font-weight:400;font-style:normal;white-space:nowrap;text-align:left;">Contains</div>
<svg style="position:absolute;left:1306px;top:271.0px;" width="8" height="6" viewBox="0 0 8 6"><path d="M1.2 1.2 L3.9 3.9 L6.6 1.2" fill="none" stroke="#3c3c3c" stroke-width="1.15"/></svg>
<div style="position:absolute;left:1323px;top:262px;width:536px;height:24px;box-sizing:border-box;border:1px solid #abadb3;background:#fff"></div>
<div style="position:absolute;left:1863px;top:262px;width:24px;height:24px;box-sizing:border-box;border:1px solid #6e6e6e;background:#dddddd"></div>
<svg style="position:absolute;left:1868px;top:267px;" width="14" height="14" viewBox="0 0 14 14"><path d="M1 1 L13 13 M13 1 L1 13" stroke="#555" stroke-width="0.9"/></svg>
<div style="position:absolute;left:561px;top:286px;width:538px;height:24px;box-sizing:border-box;border:1px solid #acacac;background:linear-gradient(#f0f0f0,#e5e5e5)"></div>
<div style="position:absolute;left:567px;top:292.91px;font-size:11.8px;line-height:11.8px;color:#000;font-weight:400;font-style:normal;white-space:nowrap;text-align:left;">Room Name</div>
<svg style="position:absolute;left:1086px;top:295.0px;" width="8" height="6" viewBox="0 0 8 6"><path d="M1.2 1.2 L3.9 3.9 L6.6 1.2" fill="none" stroke="#3c3c3c" stroke-width="1.15"/></svg>
<div style="position:absolute;left:1103px;top:286px;width:216px;height:24px;box-sizing:border-box;border:1px solid #acacac;background:linear-gradient(#f0f0f0,#e5e5e5)"></div>
<div style="position:absolute;left:1109px;top:292.14px;font-size:12px;line-height:12px;color:#000;font-weight:400;font-style:normal;white-space:nowrap;text-align:left;">In</div>
<svg style="position:absolute;left:1306px;top:295.0px;" width="8" height="6" viewBox="0 0 8 6"><path d="M1.2 1.2 L3.9 3.9 L6.6 1.2" fill="none" stroke="#3c3c3c" stroke-width="1.15"/></svg>
<div style="position:absolute;left:1323px;top:286px;width:536px;height:24px;box-sizing:border-box;border:1px solid #abadb3;background:#fff"></div>
<div style="position:absolute;left:1863px;top:286px;width:24px;height:24px;box-sizing:border-box;border:1px solid #6e6e6e;background:#dddddd"></div>
<svg style="position:absolute;left:1868px;top:291px;" width="14" height="14" viewBox="0 0 14 14"><path d="M1 1 L13 13 M13 1 L1 13" stroke="#555" stroke-width="0.9"/></svg>
<div style="position:absolute;left:561px;top:310px;width:538px;height:24px;box-sizing:border-box;border:1px solid #acacac;background:linear-gradient(#f0f0f0,#e5e5e5)"></div>
<div style="position:absolute;left:567px;top:316.91px;font-size:11.8px;line-height:11.8px;color:#000;font-weight:400;font-style:normal;white-space:nowrap;text-align:left;">Has Room Data</div>
<svg style="position:absolute;left:1086px;top:319.0px;" width="8" height="6" viewBox="0 0 8 6"><path d="M1.2 1.2 L3.9 3.9 L6.6 1.2" fill="none" stroke="#3c3c3c" stroke-width="1.15"/></svg>
<div style="position:absolute;left:1103px;top:310px;width:216px;height:24px;box-sizing:border-box;border:1px solid #acacac;background:linear-gradient(#f0f0f0,#e5e5e5)"></div>
<div style="position:absolute;left:1109px;top:316.14px;font-size:12px;line-height:12px;color:#000;font-weight:400;font-style:normal;white-space:nowrap;text-align:left;">In</div>
<svg style="position:absolute;left:1306px;top:319.0px;" width="8" height="6" viewBox="0 0 8 6"><path d="M1.2 1.2 L3.9 3.9 L6.6 1.2" fill="none" stroke="#3c3c3c" stroke-width="1.15"/></svg>
<div style="position:absolute;left:1323px;top:310px;width:536px;height:24px;box-sizing:border-box;border:1px solid #707070;background:#fff"></div>
<div style="position:absolute;left:1323px;top:317.04px;font-size:12px;line-height:12px;color:#000;font-weight:400;font-style:normal;white-space:nowrap;text-align:center;width:536px;">No selection</div>
<div style="position:absolute;left:1863px;top:310px;width:24px;height:24px;box-sizing:border-box;border:1px solid #6e6e6e;background:#dddddd"></div>
<svg style="position:absolute;left:1868px;top:315px;" width="14" height="14" viewBox="0 0 14 14"><path d="M1 1 L13 13 M13 1 L1 13" stroke="#555" stroke-width="0.9"/></svg>
<div style="position:absolute;left:561px;top:334px;width:538px;height:24px;box-sizing:border-box;border:1px solid #acacac;background:linear-gradient(#f0f0f0,#e5e5e5)"></div>
<div style="position:absolute;left:567px;top:340.91px;font-size:11.8px;line-height:11.8px;color:#000;font-weight:400;font-style:normal;white-space:nowrap;text-align:left;">Room status</div>
<svg style="position:absolute;left:1086px;top:343.0px;" width="8" height="6" viewBox="0 0 8 6"><path d="M1.2 1.2 L3.9 3.9 L6.6 1.2" fill="none" stroke="#3c3c3c" stroke-width="1.15"/></svg>
<div style="position:absolute;left:1103px;top:334px;width:216px;height:24px;box-sizing:border-box;border:1px solid #acacac;background:linear-gradient(#f0f0f0,#e5e5e5)"></div>
<div style="position:absolute;left:1109px;top:340.14px;font-size:12px;line-height:12px;color:#000;font-weight:400;font-style:normal;white-space:nowrap;text-align:left;">In</div>
<svg style="position:absolute;left:1306px;top:343.0px;" width="8" height="6" viewBox="0 0 8 6"><path d="M1.2 1.2 L3.9 3.9 L6.6 1.2" fill="none" stroke="#3c3c3c" stroke-width="1.15"/></svg>
<div style="position:absolute;left:1323px;top:334px;width:536px;height:24px;box-sizing:border-box;border:1px solid #707070;background:#fff"></div>
<div style="position:absolute;left:1323px;top:341.04px;font-size:12px;line-height:12px;color:#000;font-weight:400;font-style:normal;white-space:nowrap;text-align:center;width:536px;">No selection</div>
<div style="position:absolute;left:1863px;top:334px;width:24px;height:24px;box-sizing:border-box;border:1px solid #6e6e6e;background:#dddddd"></div>
<svg style="position:absolute;left:1868px;top:339px;" width="14" height="14" viewBox="0 0 14 14"><path d="M1 1 L13 13 M13 1 L1 13" stroke="#555" stroke-width="0.9"/></svg>
<div style="position:absolute;left:561px;top:358px;width:538px;height:24px;box-sizing:border-box;border:1px solid #acacac;background:linear-gradient(#f0f0f0,#e5e5e5)"></div>
<div style="position:absolute;left:567px;top:364.91px;font-size:11.8px;line-height:11.8px;color:#000;font-weight:400;font-style:normal;white-space:nowrap;text-align:left;">Level</div>
<svg style="position:absolute;left:1086px;top:367.0px;" width="8" height="6" viewBox="0 0 8 6"><path d="M1.2 1.2 L3.9 3.9 L6.6 1.2" fill="none" stroke="#3c3c3c" stroke-width="1.15"/></svg>
<div style="position:absolute;left:1103px;top:358px;width:216px;height:24px;box-sizing:border-box;border:1px solid #acacac;background:linear-gradient(#f0f0f0,#e5e5e5)"></div>
<div style="position:absolute;left:1109px;top:364.14px;font-size:12px;line-height:12px;color:#000;font-weight:400;font-style:normal;white-space:nowrap;text-align:left;">In</div>
<svg style="position:absolute;left:1306px;top:367.0px;" width="8" height="6" viewBox="0 0 8 6"><path d="M1.2 1.2 L3.9 3.9 L6.6 1.2" fill="none" stroke="#3c3c3c" stroke-width="1.15"/></svg>
<div style="position:absolute;left:1323px;top:358px;width:536px;height:24px;box-sizing:border-box;border:1px solid #8a8a8a;background:#fff"></div>
<div style="position:absolute;left:1323px;top:365.04px;font-size:12px;line-height:12px;color:#000;font-weight:400;font-style:normal;white-space:nowrap;text-align:center;width:536px;">No selection</div>
<div style="position:absolute;left:1863px;top:358px;width:24px;height:24px;box-sizing:border-box;border:1px solid #6e6e6e;background:#dddddd"></div>
<svg style="position:absolute;left:1868px;top:363px;" width="14" height="14" viewBox="0 0 14 14"><path d="M1 1 L13 13 M13 1 L1 13" stroke="#555" stroke-width="0.9"/></svg>
<div style="position:absolute;left:562px;top:417.84px;font-size:12px;line-height:12px;color:#000;font-weight:400;font-style:normal;white-space:nowrap;text-align:left;">Order by</div>
<div style="position:absolute;left:619px;top:414px;width:300px;height:21px;box-sizing:border-box;border:1px solid #abadb3;background:#fff"></div>
<div style="position:absolute;left:622px;top:418.10px;font-size:11.7px;line-height:11.7px;color:#000;font-weight:400;font-style:normal;white-space:nowrap;text-align:left;">room_func_no</div>
<div style="position:absolute;left:929px;top:412px;width:24px;height:24px;box-sizing:border-box;border:1px solid #6e6e6e;background:#dddddd"></div>
<svg style="position:absolute;left:929px;top:412px;" width="24" height="24" viewBox="0 0 24 24"><rect x="6.3" y="11.4" width="2.2" height="2.2" fill="#4a1a10"/><rect x="10.9" y="11.4" width="2.2" height="2.2" fill="#4a1a10"/><rect x="15.5" y="11.4" width="2.2" height="2.2" fill="#4a1a10"/></svg>
<div style="position:absolute;left:958px;top:412px;width:24px;height:24px;box-sizing:border-box;border:1px solid #6e6e6e;background:#dddddd"></div>
<svg style="position:absolute;left:963px;top:417px;" width="14" height="14" viewBox="0 0 14 14"><path d="M1 1 L13 13 M13 1 L1 13" stroke="#555" stroke-width="0.9"/></svg>
<div style="position:absolute;left:1768px;top:412px;width:120px;height:25px;box-sizing:border-box;border:1px solid #6e6e6e;background:#dddddd"></div>
<div style="position:absolute;left:1768px;top:418.84px;font-size:12px;line-height:12px;color:#000;font-weight:400;font-style:normal;white-space:nowrap;text-align:center;width:120px;">Add more filters</div>
<div style="position:absolute;left:550px;top:458px;width:1350px;height:277px;box-sizing:border-box;border:1px solid #e6e6e6;border-radius:4px;background:#fff"></div>
<svg style="position:absolute;left:561px;top:469px;" width="21" height="21" viewBox="0 0 21 21"><circle cx="10.5" cy="10.5" r="9.3" fill="#fff" stroke="#333" stroke-width="1.1"/><path d="M6.5 12.3 L10.5 8.3 L14.5 12.3" fill="none" stroke="#222" stroke-width="1.6"/></svg>
<div style="position:absolute;left:595.5px;top:473.84px;font-size:12px;line-height:12px;color:#0e9ad8;font-weight:700;font-style:normal;white-space:nowrap;text-align:left;">Report Content</div>
<div style="position:absolute;left:1769px;top:472px;width:120px;height:25px;box-sizing:border-box;border:1px solid #6e6e6e;background:#dddddd"></div>
<div style="position:absolute;left:1769px;top:479.84px;font-size:12px;line-height:12px;color:#000;font-weight:400;font-style:normal;white-space:nowrap;text-align:center;width:120px;">Show more</div>
<div style="position:absolute;left:572px;top:519px;width:14px;height:14px;box-sizing:border-box;border:1px solid #333;background:#fff"></div>
<svg style="position:absolute;left:572px;top:519px;" width="14" height="14" viewBox="0 0 14 14"><path d="M3 7 L5.8 10.5 L11 2.8" fill="none" stroke="#111" stroke-width="1.8"/></svg>
<div style="position:absolute;left:591px;top:520.81px;font-size:11.8px;line-height:11.8px;color:#000;font-weight:400;font-style:normal;white-space:nowrap;text-align:left;">Room Data</div>
<div style="position:absolute;left:572px;top:551px;width:14px;height:14px;box-sizing:border-box;border:1px solid #333;background:#fff"></div>
<svg style="position:absolute;left:572px;top:551px;" width="14" height="14" viewBox="0 0 14 14"><path d="M3 7 L5.8 10.5 L11 2.8" fill="none" stroke="#111" stroke-width="1.8"/></svg>
<div style="position:absolute;left:591px;top:552.81px;font-size:11.8px;line-height:11.8px;color:#000;font-weight:400;font-style:normal;white-space:nowrap;text-align:left;">Occurrences</div>
<div style="position:absolute;left:572px;top:583px;width:14px;height:14px;box-sizing:border-box;border:1px solid #333;background:#fff"></div>
<div style="position:absolute;left:591px;top:584.81px;font-size:11.8px;line-height:11.8px;color:#000;font-weight:400;font-style:normal;white-space:nowrap;text-align:left;">Note</div>
<div style="position:absolute;left:572px;top:615px;width:14px;height:14px;box-sizing:border-box;border:1px solid #333;background:#fff"></div>
<div style="position:absolute;left:591px;top:616.81px;font-size:11.8px;line-height:11.8px;color:#000;font-weight:400;font-style:normal;white-space:nowrap;text-align:left;">Images</div>
<div style="position:absolute;left:572px;top:647px;width:14px;height:14px;box-sizing:border-box;border:1px solid #333;background:#fff"></div>
<div style="position:absolute;left:591px;top:648.81px;font-size:11.8px;line-height:11.8px;color:#000;font-weight:400;font-style:normal;white-space:nowrap;text-align:left;">Room Template images</div>
<div style="position:absolute;left:572px;top:678px;width:14px;height:14px;box-sizing:border-box;border:1px solid #333;background:#fff"></div>
<div style="position:absolute;left:591px;top:679.81px;font-size:11.8px;line-height:11.8px;color:#000;font-weight:400;font-style:normal;white-space:nowrap;text-align:left;">Documents</div>
<div style="position:absolute;left:745px;top:520.84px;font-size:12px;line-height:12px;color:#000;font-weight:400;font-style:normal;white-space:nowrap;text-align:left;text-decoration:underline;text-underline-offset:1px;text-decoration-thickness:1px;text-decoration-skip-ink:none;text-decoration-color:#333">Edit</div>
<div style="position:absolute;left:745px;top:552.84px;font-size:12px;line-height:12px;color:#000;font-weight:400;font-style:normal;white-space:nowrap;text-align:left;text-decoration:underline;text-underline-offset:1px;text-decoration-thickness:1px;text-decoration-skip-ink:none;text-decoration-color:#333">Edit</div>
<div style="position:absolute;left:791.5px;top:552.84px;font-size:12px;line-height:12px;color:#000;font-weight:400;font-style:normal;white-space:nowrap;text-align:left;text-decoration:underline;text-underline-offset:1px;text-decoration-thickness:1px;text-decoration-skip-ink:none;text-decoration-color:#333">Filter</div>
<div style="position:absolute;left:829.8px;top:552.84px;font-size:12px;line-height:12px;color:#000;font-weight:400;font-style:normal;white-space:nowrap;text-align:left;text-decoration:underline;text-underline-offset:1px;text-decoration-thickness:1px;text-decoration-skip-ink:none;text-decoration-color:#333">Split by Item List</div>
<div style="position:absolute;left:550px;top:745px;width:1350px;height:147px;box-sizing:border-box;border:1px solid #e6e6e6;border-radius:4px;background:#fff"></div>
<svg style="position:absolute;left:561px;top:756px;" width="21" height="21" viewBox="0 0 21 21"><circle cx="10.5" cy="10.5" r="9.3" fill="#fff" stroke="#333" stroke-width="1.1"/><path d="M6.5 12.3 L10.5 8.3 L14.5 12.3" fill="none" stroke="#222" stroke-width="1.6"/></svg>
<div style="position:absolute;left:595.5px;top:760.84px;font-size:12px;line-height:12px;color:#0e9ad8;font-weight:700;font-style:normal;white-space:nowrap;text-align:left;">More options</div>
<div style="position:absolute;left:561px;top:803.84px;font-size:12px;line-height:12px;color:#000;font-weight:400;font-style:normal;white-space:nowrap;text-align:left;">Report title</div>
<div style="position:absolute;left:561px;top:831.84px;font-size:12px;line-height:12px;color:#000;font-weight:400;font-style:normal;white-space:nowrap;text-align:left;">Report subtitle</div>
<div style="position:absolute;left:561px;top:859.59px;font-size:12.3px;line-height:12.3px;color:#000;font-weight:400;font-style:normal;white-space:nowrap;text-align:left;">Output format</div>
<div style="position:absolute;left:649px;top:800px;width:680px;height:22px;box-sizing:border-box;border:1px solid #abadb3;background:#fff"></div>
<div style="position:absolute;left:654px;top:805.84px;font-size:12px;line-height:12px;color:#000;font-weight:400;font-style:normal;white-space:nowrap;text-align:left;">Room Details</div>
<div style="position:absolute;left:649px;top:828px;width:680px;height:22px;box-sizing:border-box;border:1px solid #abadb3;background:#fff"></div>
<div style="position:absolute;left:649px;top:856px;width:80px;height:22px;box-sizing:border-box;border:1px solid #acacac;background:linear-gradient(#f0f0f0,#e5e5e5)"></div>
<div style="position:absolute;left:655px;top:862.14px;font-size:12px;line-height:12px;color:#000;font-weight:400;font-style:normal;white-space:nowrap;text-align:left;">PDF</div>
<svg style="position:absolute;left:716px;top:864.0px;" width="8" height="6" viewBox="0 0 8 6"><path d="M1.2 1.2 L3.9 3.9 L6.6 1.2" fill="none" stroke="#3c3c3c" stroke-width="1.15"/></svg>
<div style="position:absolute;left:738.8px;top:861.76px;font-size:12.1px;line-height:12.1px;color:#000;font-weight:400;font-style:normal;white-space:nowrap;text-align:left;">Get file name from property</div>
<div style="position:absolute;left:897px;top:855px;width:369px;height:24px;box-sizing:border-box;border:1px solid #cfcfcf;background:#fff"></div>
<div style="position:absolute;left:1276px;top:855px;width:24px;height:24px;box-sizing:border-box;border:1px solid #a3a8ad;background:#f2f2f2"></div>
<svg style="position:absolute;left:1276px;top:855px;" width="24" height="24" viewBox="0 0 24 24"><rect x="6.3" y="11.4" width="2.2" height="2.2" fill="#4a1a10"/><rect x="10.9" y="11.4" width="2.2" height="2.2" fill="#4a1a10"/><rect x="15.5" y="11.4" width="2.2" height="2.2" fill="#4a1a10"/></svg>
<div style="position:absolute;left:1305px;top:855px;width:24px;height:24px;box-sizing:border-box;border:1px solid #a3a8ad;background:#f2f2f2"></div>
<svg style="position:absolute;left:1310px;top:860px;" width="14" height="14" viewBox="0 0 14 14"><path d="M1 1 L13 13 M13 1 L1 13" stroke="#555" stroke-width="0.9"/></svg>
<div style="position:absolute;left:1339px;top:804.87px;font-size:11.5px;line-height:11.5px;color:#000;font-weight:400;font-style:normal;white-space:nowrap;text-align:left;">Paper size</div>
<div style="position:absolute;left:1339px;top:831.84px;font-size:12px;line-height:12px;color:#000;font-weight:400;font-style:normal;white-space:nowrap;text-align:left;">Orientation</div>
<div style="position:absolute;left:1339px;top:859.84px;font-size:12px;line-height:12px;color:#000;font-weight:400;font-style:normal;white-space:nowrap;text-align:left;">Font family</div>
<div style="position:absolute;left:1409px;top:800px;width:130px;height:22px;box-sizing:border-box;border:1px solid #acacac;background:linear-gradient(#f0f0f0,#e5e5e5)"></div>
<div style="position:absolute;left:1415px;top:806.14px;font-size:12px;line-height:12px;color:#000;font-weight:400;font-style:normal;white-space:nowrap;text-align:left;">A4</div>
<svg style="position:absolute;left:1526px;top:808.0px;" width="8" height="6" viewBox="0 0 8 6"><path d="M1.2 1.2 L3.9 3.9 L6.6 1.2" fill="none" stroke="#3c3c3c" stroke-width="1.15"/></svg>
<div style="position:absolute;left:1409px;top:828px;width:130px;height:22px;box-sizing:border-box;border:1px solid #acacac;background:linear-gradient(#f0f0f0,#e5e5e5)"></div>
<div style="position:absolute;left:1415px;top:834.14px;font-size:12px;line-height:12px;color:#000;font-weight:400;font-style:normal;white-space:nowrap;text-align:left;">Portrait</div>
<svg style="position:absolute;left:1526px;top:836.0px;" width="8" height="6" viewBox="0 0 8 6"><path d="M1.2 1.2 L3.9 3.9 L6.6 1.2" fill="none" stroke="#3c3c3c" stroke-width="1.15"/></svg>
<div style="position:absolute;left:1409px;top:856px;width:130px;height:22px;box-sizing:border-box;border:1px solid #acacac;background:linear-gradient(#f0f0f0,#e5e5e5)"></div>
<div style="position:absolute;left:1415px;top:862.14px;font-size:12px;line-height:12px;color:#000;font-weight:400;font-style:normal;white-space:nowrap;text-align:left;">Lato</div>
<svg style="position:absolute;left:1526px;top:864.0px;" width="8" height="6" viewBox="0 0 8 6"><path d="M1.2 1.2 L3.9 3.9 L6.6 1.2" fill="none" stroke="#3c3c3c" stroke-width="1.15"/></svg>
<div style="position:absolute;left:1800px;top:1019px;width:100px;height:20px;box-sizing:border-box;border:1px solid #7a7a7a;background:#dddddd"></div>
<div style="position:absolute;left:1800px;top:1023.84px;font-size:12px;line-height:12px;color:#000;font-weight:400;font-style:normal;white-space:nowrap;text-align:center;width:100px;">Generate</div>
<div style="position:absolute;left:1857px;top:114px;width:63px;height:36px;box-sizing:border-box;background:#eef0f6;border:1px solid #8c8c8c"></div>
<div style="position:absolute;left:1869px;top:127.86px;font-size:10.8px;line-height:10.8px;color:#333;font-weight:400;font-style:italic;white-space:nowrap;text-align:left;">Save as</div>
<svg style="position:absolute;left:1780px;top:100px;" width="72" height="52" viewBox="0 0 72 52"><defs><filter id="sh" x="-30%" y="-30%" width="160%" height="160%"><feGaussianBlur in="SourceAlpha" stdDeviation="1.5"/><feOffset dx="1" dy="2" result="o"/><feComponentTransfer><feFuncA type="linear" slope="0.45"/></feComponentTransfer><feMerge><feMergeNode/><feMergeNode in="SourceGraphic"/></feMerge></filter></defs>
<g filter="url(#sh)"><path d="M10.5 42.5 L45 19" stroke="#f33c40" stroke-width="7.2" stroke-linecap="round"/>
<path d="M65.5 6 L33 11 L49.5 34 Z" fill="#f23b3f" stroke="#f23b3f" stroke-width="1" stroke-linejoin="round"/></g></svg></div></body></html>
